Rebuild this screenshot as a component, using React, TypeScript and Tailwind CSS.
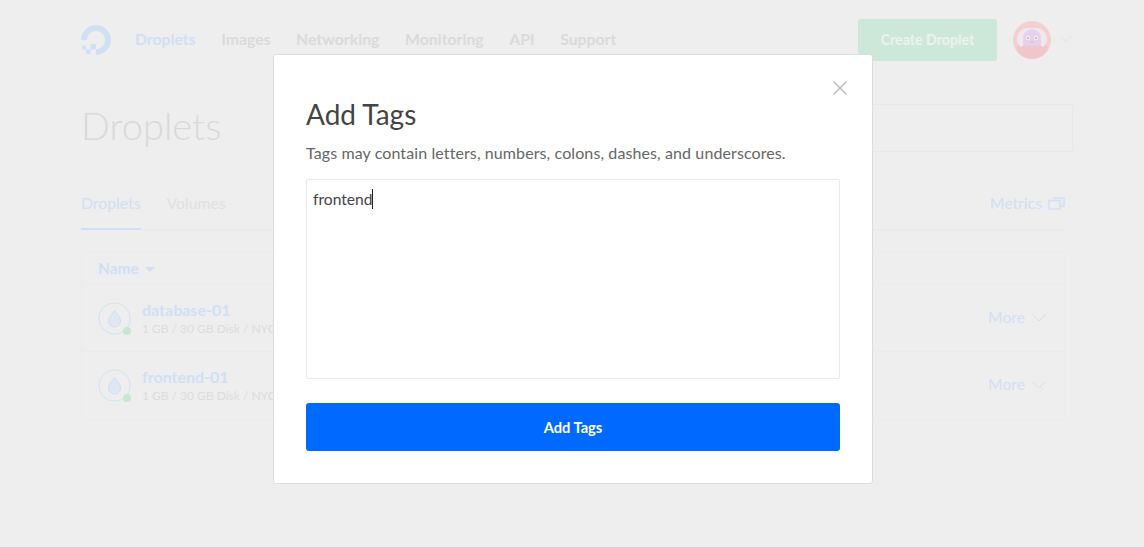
import { ChevronDown, X } from "lucide-react";

const navItems = ["Images", "Networking", "Monitoring", "API", "Support"];

const droplets = [
  { name: "database-01", meta: "1 GB / 30 GB Disk / NYC3" },
  { name: "frontend-01", meta: "1 GB / 30 GB Disk / NYC3" },
];

function Logo() {
  return (
    <svg width="30" height="30" viewBox="0 0 30 30" className="shrink-0">
      <path d="M15 30 v-5.8 a9.2 9.2 0 1 0 -9.2 -9.2 H0 A15 15 0 1 1 15 30 Z" fill="#cfe0f4" />
      <rect x="9.5" y="19" width="5.5" height="5.5" fill="#cfe0f4" />
      <rect x="5" y="24.5" width="4.5" height="4.5" fill="#cfe0f4" />
      <rect x="1" y="20.5" width="4" height="4" fill="#cfe0f4" />
    </svg>
  );
}

function Avatar() {
  return (
    <svg width="38" height="38" viewBox="0 0 38 38" className="shrink-0">
      <circle cx="19" cy="19" r="19" fill="#f3cfd2" />
      <rect x="4" y="7" width="30" height="22" rx="11" fill="#eee9ee" />
      <path d="M10 27 V17 a9 9 0 0 1 18 0 V27 Z" fill="#e6d2ea" />
      <circle cx="15" cy="17" r="2.2" fill="#f3eef3" />
      <circle cx="23" cy="17" r="2.2" fill="#f3eef3" />
      <circle cx="15" cy="17" r="0.9" fill="#b9a4b4" />
      <circle cx="23" cy="17" r="0.9" fill="#b9a4b4" />
      <path d="M17.5 20 h3 l-1.5 2.5 Z" fill="#dcb8cc" />
      <path d="M3 26 q2.7 -3 5.3 0 q2.7 -3 5.3 0 q2.7 -3 5.4 0 q2.7 -3 5.3 0 q2.7 -3 5.3 0 q2.7 -3 5.4 0 C33 33 27 38 19 38 C11 38 5 33 3 26 Z" fill="#f0c6ca" />
    </svg>
  );
}

function DropletIcon() {
  return (
    <div className="relative h-[33px] w-[33px] shrink-0">
      <svg width="33" height="33" viewBox="0 0 33 33">
        <circle cx="16.5" cy="16.5" r="15.7" fill="none" stroke="#d2e1f4" strokeWidth="1" />
        <path d="M16.5 8.5 C19 12 22.5 15 22.5 19 a6 6 0 0 1 -12 0 C10.5 15 14 12 16.5 8.5 Z" fill="#dfe7f2" stroke="#cfdef2" strokeWidth="1" />
      </svg>
      <div className="absolute bottom-0 right-0 h-2 w-2 rounded-full bg-[#c6e8d3]" />
    </div>
  );
}

function MetricsIcon() {
  return (
    <svg width="17" height="14" viewBox="0 0 17 14" fill="none" stroke="#d0e0f4" strokeWidth="1.5" className="shrink-0">
      <rect x="1" y="4.5" width="11" height="8.5" />
      <path d="M5 2 H16 V10 H13" />
    </svg>
  );
}

export default function App() {
  return (
    <div className="relative h-[547px] w-[1144px] overflow-hidden bg-[#eeeeee] font-['Lato','Liberation_Sans',sans-serif]">
      <div className="pl-[81px] pr-[71px]">
        <header className="flex h-[80px] items-center pb-[1px]">
          <Logo />
          <nav className="mb-[1px] ml-[24px] flex gap-[25.5px] text-[15.8px] font-bold">
            <span className="text-[#cfe0f4]">Droplets</span>
            {navItems.map((item) => (
              <span key={item} className="text-[#dadada]">{item}</span>
            ))}
          </nav>
          <div className="ml-auto flex w-[215px] items-center">
            <div className="flex h-[42px] w-[139px] shrink-0 items-center justify-center rounded-[3px] bg-[#cde8d9] text-[14.2px] font-bold text-[#ecf3ef]">
              Create Droplet
            </div>
            <div className="ml-[16px] shrink-0"><Avatar /></div>
            <ChevronDown className="mb-[2px] ml-[5px] h-[20px] w-[20px] shrink-0 text-[#e0e0e0]" strokeWidth={1.1} />
          </div>
        </header>

        <div className="mt-[24px] flex h-[48px] items-center justify-between">
          <h1 className="mb-[6px] text-[38px] font-light text-[#d9d9d9]">Droplets</h1>
          <div className="h-[48px] w-[400px] rounded-[3px] border border-[#e7e7e7]" />
        </div>

        <div className="mr-[8px] mt-[32px] flex h-[46px] items-start justify-between border-b border-[#e8e8e8] text-[15.8px]">
          <div className="flex gap-[26px] pt-[7px]">
            <span className="h-[39px] border-b-2 border-[#cfe0f4] text-[#cfe0f4]">Droplets</span>
            <span className="text-[#e0e0e0]">Volumes</span>
          </div>
          <div className="flex items-center gap-[6px] pt-[7px] text-[#d0e0f4]">
            Metrics
            <MetricsIcon />
          </div>
        </div>

        <div className="mr-[8px] mt-[22px] rounded-[3px] border border-[#ebebeb]">
          <div className="flex h-[32px] items-center gap-[6px] border-b border-[#ebebeb] pl-[16px] text-[15.5px] font-bold text-[#d0e0f4]">
            Name
            <span className="mt-[1px] h-0 w-0 border-x-[5px] border-t-[5px] border-x-transparent border-t-[#d0e0f4]" />
          </div>
          {droplets.map((d, i) => (
            <div key={d.name} className={`flex h-[67px] items-center border-b pl-[16px] pr-[13px] ${i === 0 ? "border-[#ebebeb]" : "border-transparent"}`}>
              <DropletIcon />
              <div className="ml-[11px]">
                <div className="text-[16px] font-bold leading-[20px] text-[#d0e0f4]">{d.name}</div>
                <div className="mt-[1px] text-[12px] leading-[16px] text-[#dcdcdc]">{d.meta}</div>
              </div>
              <div className="ml-auto flex items-center text-[15.7px] text-[#d0e0f4]">
                More
                <ChevronDown className="ml-[2px] h-[24px] w-[24px] shrink-0 text-[#cfdff4]" strokeWidth={1} />
              </div>
            </div>
          ))}
        </div>
      </div>

      {/* Add Tags modal */}
      <div className="absolute inset-0 pl-[273px] pt-[54px]">
        <div className="relative h-[430px] w-[600px] rounded-[3px] border border-[#dcdcdc] bg-white px-[32px] pt-[43px]">
          <X className="absolute right-[20px] top-[21px] h-[24px] w-[24px] text-[#b5b5b5]" strokeWidth={1.2} />
          <h2 className="text-[28px] leading-[32px] text-[#444444]">Add Tags</h2>
          <p className="mt-[12px] text-[16px] leading-[22px] tracking-[0.1px] text-[#666666]">
            Tags may contain letters, numbers, colons, dashes, and underscores.
          </p>
          <div className="mt-[15px] flex h-[200px] items-start rounded-[2px] border border-[#eaeaea] px-[6px] pt-[8px]">
            <span className="text-[15.6px] leading-[22px] text-[#444444]">frontend</span>
            <span className="mt-[1px] h-[20px] w-px bg-[#222222]" />
          </div>
          <button className="mt-[24px] h-[48px] w-full rounded-[3px] bg-[#0069ff] text-[14.7px] font-bold text-white">
            Add Tags
          </button>
        </div>
      </div>
    </div>
  );
}
